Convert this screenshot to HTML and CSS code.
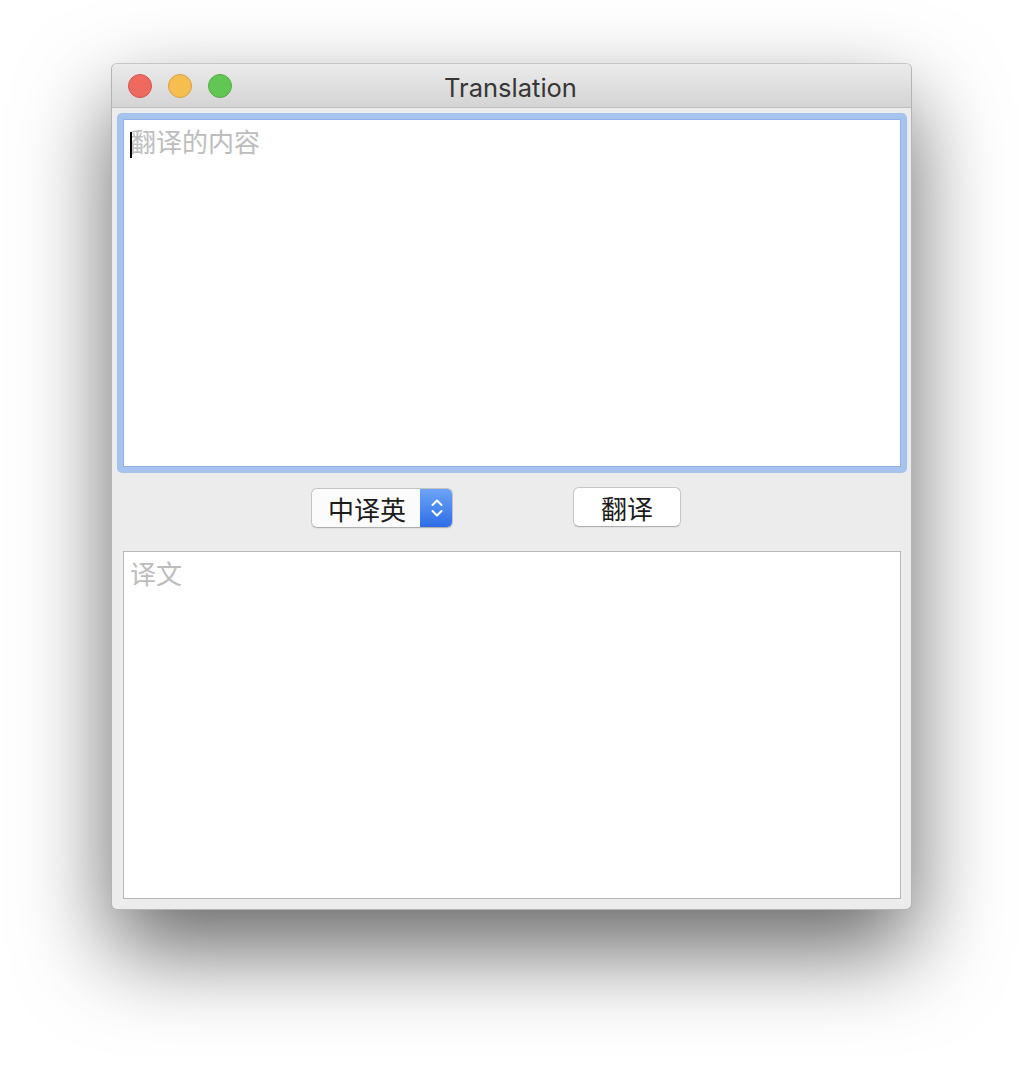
FILE: index.html
```html
<!DOCTYPE html>
<html lang="zh">
<head>
<meta charset="utf-8">
<title>Translation</title>
<link rel="stylesheet" href="styles.css">
</head>
<body>
<div class="window">
  <div class="titlebar">
    <div class="lights">
      <span class="light red"></span>
      <span class="light yellow"></span>
      <span class="light green"></span>
    </div>
    <div class="title">Translation</div>
  </div>
  <div class="content">
    <div class="focus-ring">
      <div class="textbox input"><span class="caret"></span><span class="placeholder">翻译的内容</span></div>
    </div>
    <div class="controls">
      <div class="popup">
        <span class="popup-label">中译英</span>
        <span class="popup-arrows">
          <svg width="16" height="28" viewBox="0 0 16 28"><path d="M3.5 11 L8 6.5 L12.5 11" fill="none" stroke="#fff" stroke-width="2" stroke-linecap="round" stroke-linejoin="round"/><path d="M3.5 17 L8 21.5 L12.5 17" fill="none" stroke="#fff" stroke-width="2" stroke-linecap="round" stroke-linejoin="round"/></svg>
        </span>
      </div>
      <div class="button">翻译</div>
    </div>
    <div class="textbox output"><span class="placeholder">译文</span></div>
  </div>
</div>
</body>
</html>
```
FILE: styles.css
```css
html, body {
  margin: 0;
  padding: 0;
  background: #ffffff;
}
body {
  width: 1024px;
  height: 1070px;
  overflow: hidden;
  font-family: Inter, "Noto Sans CJK SC", sans-serif;
}
.window {
  box-sizing: border-box;
  width: 801px;
  height: 847px;
  margin: 63px 0 0 111px;
  border: 1px solid #b4b4b4;
  border-top-color: #c6c6c6;
  border-radius: 6px;
  background: #ececec;
  box-shadow: 0 40px 90px rgba(0, 0, 0, 0.6);
  display: flex;
  flex-direction: column;
  overflow: hidden;
}
.titlebar {
  box-sizing: border-box;
  height: 44px;
  flex: none;
  border-bottom: 1px solid #bebebe;
  background: linear-gradient(#ebebeb, #d4d4d4);
  display: flex;
  align-items: center;
  position: relative;
}
.lights {
  display: flex;
  gap: 16px;
  padding-left: 16px;
}
.light {
  box-sizing: border-box;
  width: 24px;
  height: 24px;
  border-radius: 50%;
  display: block;
}
.red { background: #ee6a5f; border: 1px solid #d4564c; }
.yellow { background: #f6be4f; border: 1px solid #d9a23f; }
.green { background: #62c654; border: 1px solid #54ad44; }
.title {
  position: absolute;
  left: 0;
  right: 0;
  top: 3px;
  bottom: 0;
  display: flex;
  align-items: center;
  justify-content: center;
  font-size: 25.5px;
  color: #363636;
  padding-right: 2px;
  pointer-events: none;
}
.content {
  flex: 1;
  padding: 0 10px 10px 11px;
  display: flex;
  flex-direction: column;
}
.focus-ring {
  margin: 5px -6px 0 -6px;
  padding: 6px;
  background: #a6c3ed;
  border-radius: 5px;
}
.textbox {
  box-sizing: border-box;
  height: 348px;
  background: #ffffff;
  padding: 6px 6px;
  font-family: "Noto Sans CJK SC", sans-serif;
  font-size: 26px;
  line-height: 30px;
  position: relative;
}
.input {
  border: 1px solid #8fb0e4;
}
.output {
  margin-top: 23px;
  border: 1px solid #b8b8b8;
}
.placeholder {
  color: #bdbdbd;
}
.caret {
  position: absolute;
  left: 6px;
  top: 12px;
  width: 2px;
  height: 26px;
  background: #000;
}
.controls {
  margin-top: 15px;
  height: 40px;
  display: flex;
  align-items: center;
  padding-left: 188px;
  gap: 120px;
}
.popup {
  box-sizing: border-box;
  width: 142px;
  height: 40px;
  display: flex;
  border: 1px solid #c4c4c4;
  border-bottom-color: #afafaf;
  border-radius: 6px;
  background: #fbfbfb;
  overflow: hidden;
  box-shadow: 0 1px 1px rgba(0, 0, 0, 0.05);
}
.popup-label {
  flex: 1;
  display: flex;
  align-items: center;
  justify-content: center;
  font-family: "Noto Sans CJK SC", sans-serif;
  font-size: 26px;
  color: #1c1c1c;
  padding-left: 2px;
}
.popup-arrows {
  width: 33px;
  display: flex;
  align-items: center;
  justify-content: center;
  background: linear-gradient(#6ea6f8, #2c6ce6);
  margin: -1px -1px -1px 0;
}
.button {
  box-sizing: border-box;
  width: 108px;
  height: 40px;
  margin-top: -2px;
  border: 1px solid #c6c6c6;
  border-bottom-color: #b0b0b0;
  border-radius: 6px;
  background: #ffffff;
  display: flex;
  align-items: center;
  justify-content: center;
  font-family: "Noto Sans CJK SC", sans-serif;
  font-size: 26px;
  color: #1c1c1c;
  box-shadow: 0 1px 1px rgba(0, 0, 0, 0.05);
}
```
